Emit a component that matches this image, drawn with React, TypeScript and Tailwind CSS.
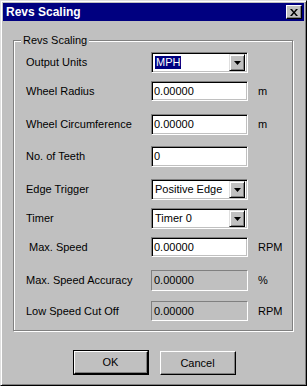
import React from 'react';

const font = { fontFamily: '"Liberation Sans", Arial, sans-serif' };

const sunken =
  'border border-t-[#808080] border-l-[#808080] border-b-white border-r-white';

const TextBox: React.FC<{ value: string; disabled?: boolean; tall?: boolean }> = ({ value, disabled, tall }) => (
  <div
    className={`${sunken} ${tall ? 'h-[21px]' : 'h-[20px]'} w-[97px] flex items-center pl-[2px] text-[11px] text-black ${
      disabled
        ? 'bg-[#c0c0c0]'
        : 'bg-white shadow-[inset_1px_1px_0_#000,inset_-1px_-1px_0_#c0c0c0]'
    }`}
  >
    {value}
  </div>
);

const Combo: React.FC<{ value: string; selected?: boolean }> = ({ value, selected }) => (
  <div
    className={`${sunken} h-[21px] w-[97px] bg-white shadow-[inset_1px_1px_0_#000,inset_-1px_-1px_0_#c0c0c0] flex items-center p-[2px] text-[11px]`}
  >
    <div className="flex-1 flex items-center h-full pl-[1px]">
      {selected ? (
        <span className="bg-[#000080] text-white px-[1px] leading-[13px]">{value}</span>
      ) : (
        <span className="text-black">{value}</span>
      )}
    </div>
    <div className="w-[16px] h-[17px] bg-[#c0c0c0] border border-t-[#dfdfdf] border-l-[#dfdfdf] border-b-black border-r-black shadow-[inset_1px_1px_0_#fff,inset_-1px_-1px_0_#808080] flex items-center justify-center">
      <svg width="7" height="4" viewBox="0 0 7 4">
        <path d="M0 0h7L3.5 4z" fill="#000" />
      </svg>
    </div>
  </div>
);

const Row: React.FC<{ label: string; mt: string; unit?: string; indent?: boolean; children: React.ReactNode }> = ({
  label,
  mt,
  unit,
  indent,
  children,
}) => (
  <div className={`flex items-center ${mt}`}>
    <div className={`w-[125px] text-[11px] text-black ${indent ? 'pl-[3px]' : ''}`}>{label}</div>
    {children}
    {unit && <div className="ml-[10px] text-[11px] text-black">{unit}</div>}
  </div>
);

const Button: React.FC<{ label: string; isDefault?: boolean }> = ({ label, isDefault }) =>
  isDefault ? (
    <div className="w-[76px] h-[25px] border border-black">
      <div className="w-full h-full bg-[#c0c0c0] border border-t-white border-l-white border-b-black border-r-black shadow-[inset_-1px_-1px_0_#808080] flex items-center justify-center text-[11px] text-black">
        {label}
      </div>
    </div>
  ) : (
    <div className="w-[76px] h-[24px] mt-[1px] self-start bg-[#c0c0c0] border border-t-white border-l-white border-b-black border-r-black shadow-[inset_-1px_-1px_0_#808080] flex items-center justify-center text-[11px] text-black">
      {label}
    </div>
  );

export default function App() {
  return (
    <div
      style={font}
      className="w-[307px] h-[386px] bg-[#c0c0c0] border border-t-[#dfdfdf] border-l-[#dfdfdf] border-b-black border-r-black shadow-[inset_1px_1px_0_#fff,inset_-1px_-1px_0_#808080] p-[2px] flex flex-col"
    >
      <div className="h-[18px] bg-[#000080] flex items-center justify-between pl-[3px] pr-[2px]">
        <span className="text-white font-bold text-[12px] leading-none">Revs Scaling</span>
        <div className="w-[16px] h-[14px] bg-[#c0c0c0] border border-t-white border-l-white border-b-black border-r-black shadow-[inset_-1px_-1px_0_#808080] flex items-center justify-center">
          <svg width="8" height="7" viewBox="0 0 8 7">
            <path d="M0 0h2l2 2.5L6 0h2L5 3.5 8 7H6L4 4.5 2 7H0l3-3.5z" fill="#000" />
          </svg>
        </div>
      </div>

      <div className="relative ml-[10px] mt-[19px] w-[280px] h-[291px] border border-[#808080] shadow-[1px_1px_0_#fff,inset_1px_1px_0_#fff] pl-[12px] pt-[11px] flex flex-col">
        <span className="absolute left-[7px] top-[-7px] bg-[#c0c0c0] px-[2px] text-[11px] leading-[13px] text-black">
          Revs Scaling
        </span>
        <Row label="Output Units" mt="mt-0">
          <Combo value="MPH" selected />
        </Row>
        <Row label="Wheel Radius" mt="mt-[8px]" unit="m">
          <TextBox value="0.00000" />
        </Row>
        <Row label="Wheel Circumference" mt="mt-[13px]" unit="m">
          <TextBox value="0.00000" tall />
        </Row>
        <Row label="No. of Teeth" mt="mt-[11px]">
          <TextBox value="0" tall />
        </Row>
        <Row label="Edge Trigger" mt="mt-[12px]">
          <Combo value="Positive Edge" />
        </Row>
        <Row label="Timer" mt="mt-[8px]">
          <Combo value="Timer 0" />
        </Row>
        <Row label="Max. Speed" mt="mt-[8px]" unit="RPM" indent>
          <TextBox value="0.00000" />
        </Row>
        <Row label="Max. Speed Accuracy" mt="mt-[13px]" unit="%">
          <TextBox value="0.00000" tall disabled />
        </Row>
        <Row label="Low Speed Cut Off" mt="mt-[10px]" unit="RPM">
          <TextBox value="0.00000" disabled />
        </Row>
      </div>

      <div className="flex justify-center gap-[11px] mt-[19px] pl-[1px]">
        <Button label="OK" isDefault />
        <Button label="Cancel" />
      </div>
    </div>
  );
}
